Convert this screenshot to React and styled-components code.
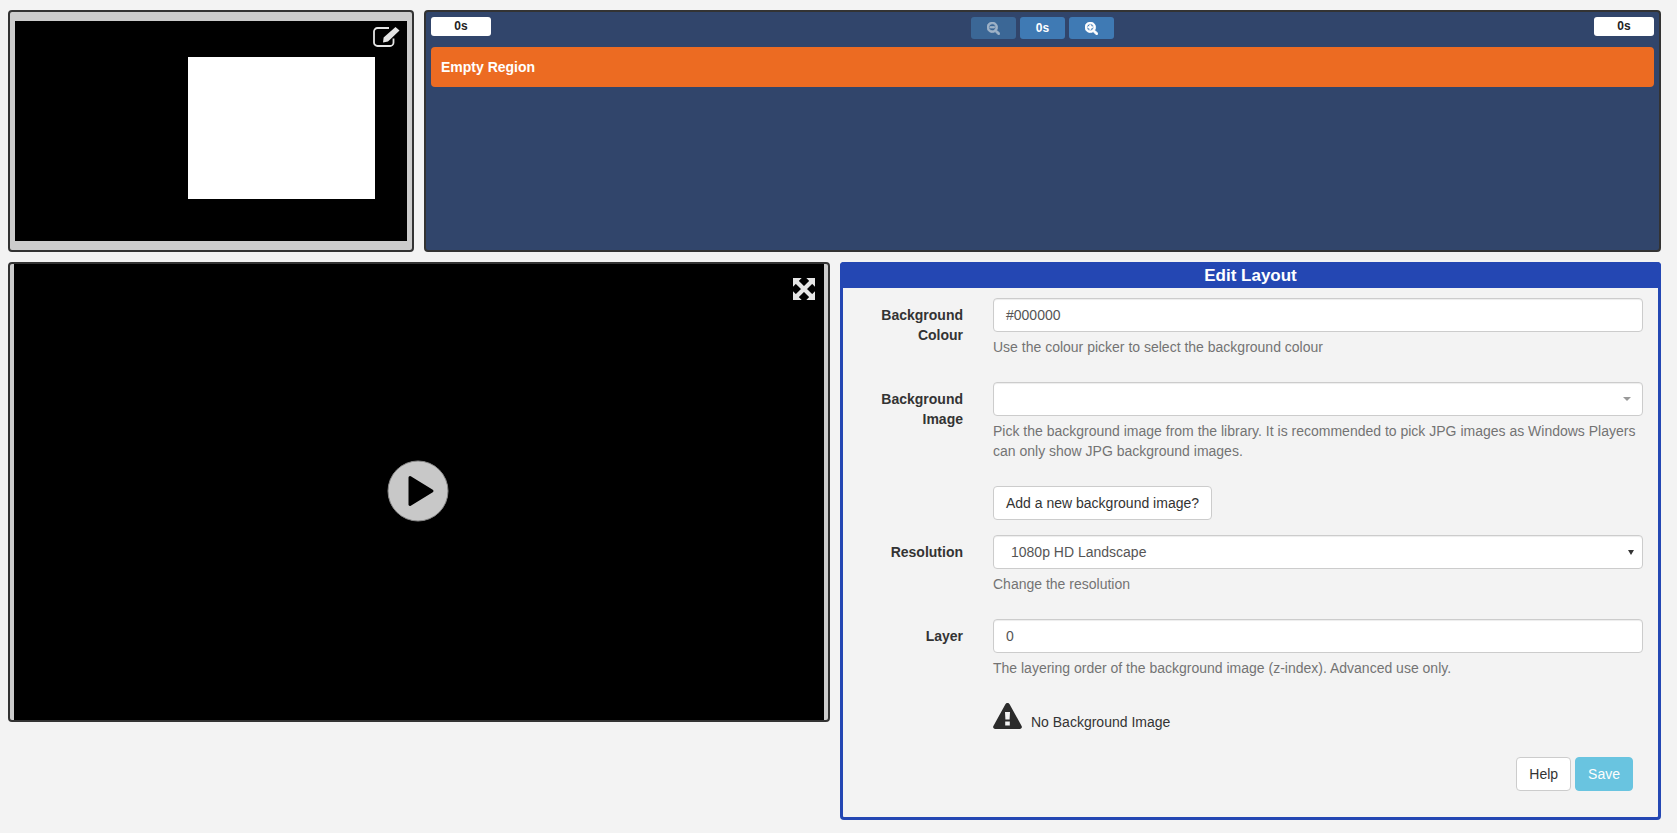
import React from "react";
import styled, { createGlobalStyle } from "styled-components";
import { FaSearchMinus, FaSearchPlus } from "react-icons/fa";

const Global = createGlobalStyle`
  html, body { margin: 0; padding: 0; background: #f3f3f3; }
  * { box-sizing: border-box; }
  body { font-family: "Liberation Sans", Arial, sans-serif; font-size: 14px; line-height: 20px; color: #333; }
`;
const Page = styled.div`
  width: 1677px; height: 833px; padding: 10px 16px 0 8px;
  display: grid; grid-template-columns: 406px 1237px; column-gap: 10px; row-gap: 10px; align-content: start;
`;
const Lower = styled.div`
  grid-column: 1 / span 2; display: grid; grid-template-columns: 822px 821px; column-gap: 10px; align-items: start;
`;
const PreviewPanel = styled.div`
  position: relative; height: 242px; padding: 9px 5px; background: #ccc; border: 2px solid #333; border-radius: 4px;
`;
const PreviewCanvas = styled.div`
  height: 220px; background: #000; padding: 36px 32px 0 161px; display: flex; justify-content: flex-end; align-items: flex-start;
`;
const WhiteRegion = styled.div`
  width: 187px; height: 142px; background: #fff;
`;
const EditIcon = styled.svg`
  position: absolute; top: 14px; left: 363px; width: 27px; height: 21px; color: #e4e4e4;
`;
const Timeline = styled.div`
  height: 242px; background: #31456b; border: 2px solid #333; border-radius: 4px; padding: 5px;
`;
const TimeBar = styled.div`
  display: flex; justify-content: space-between; align-items: flex-start; height: 30px;
`;
const TimePill = styled.div`
  width: 60px; height: 19px; background: #fff; border-radius: 3px; font-size: 12px; font-weight: 700; line-height: 19px; text-align: center; color: #222;
`;
const ZoomGroup = styled.div`
  display: flex; gap: 4px;
`;
const ZoomButton = styled.div`
  width: 45px; height: 22px; border-radius: 3px; background: ${p => p.$faded ? "#3b6796" : "#3f7ab4"};
  color: ${p => p.$faded ? "#9fb3c8" : "#fff"}; font-size: 12px; font-weight: 700; line-height: 22px;
  display: flex; align-items: center; justify-content: center;
  svg { stroke: currentColor; stroke-width: 30px; }
`;
const RegionBar = styled.div`
  height: 40px; background: #ec6b22; border-radius: 4px; color: #fff; font-weight: 700; font-size: 14px; line-height: 40px; padding-left: 10px;
`;
const VideoPanel = styled.div`
  position: relative; height: 460px; background: #ccc; border: 2px solid #333; border-radius: 4px; padding: 0 4px;
  display: flex;
`;
const VideoCanvas = styled.div`
  flex: 1; background: #000; display: flex; align-items: center; justify-content: center;
`;
const PlayIcon = styled.svg`
  width: 62px; height: 62px; display: block; margin-top: -2px; margin-left: -2px;
`;
const ExpandIcon = styled.svg`
  position: absolute; top: 14px; right: 13px; width: 22px; height: 22px; color: #e6e6e6;
`;
const EditPanel = styled.div`
  height: 558px; border: 3px solid #2447b3; border-top: 0; border-radius: 4px; display: flex; flex-direction: column;
`;
const Header = styled.div`
  height: 26px; margin: 0 -3px; background: #2447b3; color: #fff; font-size: 17px; font-weight: 700; line-height: 27px; text-align: center; border-radius: 4px 4px 0 0;
`;
const Form = styled.div`
  padding: 10px 15px 0 0; display: grid; grid-template-columns: 120px 1fr; column-gap: 30px; flex: 1; align-content: start;
`;
const Label = styled.label`
  font-weight: 700; text-align: right; padding-top: 7px; padding-left: 20px; color: #333; display: block;
`;
const FieldCell = styled.div`
  margin-bottom: 15px;
`;
const Input = styled.div`
  height: 34px; background: #fff; border: 1px solid #ccc; border-radius: 4px; padding: 6px 12px; color: #555; line-height: 20px; position: relative;
  box-shadow: inset 0 1px 1px rgba(0,0,0,.075);
`;
const SelectValue = styled.span`
  padding-left: 5px;
`;
const Caret = styled.span`
  position: absolute; top: 14px; right: ${p => p.$right}px; width: 0; height: 0; border-left: ${p => p.$w}px solid transparent; border-right: ${p => p.$w}px solid transparent; border-top: ${p => p.$h}px solid ${p => p.$color};
`;
const Help = styled.div`
  margin: 5px 0 10px; color: #737373;
`;
const AddButton = styled.div`
  display: inline-block; height: 34px; padding: 6px 12px; background: #fff; border: 1px solid #ccc; border-radius: 4px; color: #333; vertical-align: top;
`;
const WarningRow = styled.div`
  display: flex; align-items: flex-end; gap: 9px; height: 26px; color: #333; grid-column: 2;
`;
const WarningIcon = styled.svg`
  width: 29px; height: 26px; color: #2b2b2b; display: block;
`;
const WarningText = styled.span`
  line-height: 20px; margin-bottom: -3px;
`;
const Footer = styled.div`
  grid-column: 2; display: flex; justify-content: flex-end; gap: 4px; margin-top: 28px; padding-right: 10px;
`;
const HelpButton = styled.div`
  height: 34px; padding: 6px 12px; background: #fff; border: 1px solid #ccc; border-radius: 4px; color: #333;
`;
const SaveButton = styled.div`
  height: 34px; padding: 6px 12px; background: #5bc0de; opacity: .9; border: 1px solid #5bc0de; border-radius: 4px; color: #fff;
`;

export default function App() {
  return (
    <>
      <Global />
      <Page>
        <PreviewPanel>
          <PreviewCanvas><WhiteRegion /></PreviewCanvas>
          <EditIcon viewBox="0 0 27 21">
            <path d="M16 2 H4.5 A3.5 3.5 0 0 0 1 5.5 V16.5 A3.5 3.5 0 0 0 4.5 20 H17 A3.5 3.5 0 0 0 20.5 16.5 V12.5" fill="none" stroke="currentColor" strokeWidth="1.8" />
            <path d="M22.5 1 L26.5 4.5 L15 15.5 L10 16.5 L10.6 11.5 Z" fill="currentColor" />
          </EditIcon>
        </PreviewPanel>
        <Timeline>
          <TimeBar>
            <TimePill>0s</TimePill>
            <ZoomGroup>
              <ZoomButton $faded><FaSearchMinus size={13} /></ZoomButton>
              <ZoomButton>0s</ZoomButton>
              <ZoomButton><FaSearchPlus size={13} /></ZoomButton>
            </ZoomGroup>
            <TimePill>0s</TimePill>
          </TimeBar>
          <RegionBar>Empty Region</RegionBar>
        </Timeline>
        <Lower>
          <VideoPanel>
            <VideoCanvas>
              <PlayIcon viewBox="0 0 62 62">
                <circle cx="31" cy="31" r="30" fill="#c8c8c8" stroke="#888" strokeWidth="1" />
                <path d="M23 17.5 L45 31 L23 44.5 Z" fill="#000" stroke="#000" strokeWidth="3" strokeLinejoin="round" />
              </PlayIcon>
            </VideoCanvas>
            <ExpandIcon viewBox="0 0 24 24">
              <path d="M0 0 H9.5 L0 9.5 Z M24 0 V9.5 L14.5 0 Z M24 24 H14.5 L24 14.5 Z M0 24 V14.5 L9.5 24 Z" fill="currentColor" />
              <path d="M4 4 L20 20 M20 4 L4 20" stroke="currentColor" strokeWidth="4.6" fill="none" />
            </ExpandIcon>
          </VideoPanel>
          <EditPanel>
            <Header>Edit Layout</Header>
            <Form>
              <Label>Background Colour</Label>
              <FieldCell>
                <Input>#000000</Input>
                <Help>Use the colour picker to select the background colour</Help>
              </FieldCell>
              <Label>Background Image</Label>
              <FieldCell>
                <Input><Caret $right={11} $w={4} $h={4} $color="#999" /></Input>
                <Help>Pick the background image from the library. It is recommended to pick JPG images as Windows Players can only show JPG background images.</Help>
              </FieldCell>
              <span />
              <FieldCell><AddButton>Add a new background image?</AddButton></FieldCell>
              <Label>Resolution</Label>
              <FieldCell>
                <Input><SelectValue>1080p HD Landscape</SelectValue><Caret $right={8} $w={3} $h={5} $color="#333" /></Input>
                <Help>Change the resolution</Help>
              </FieldCell>
              <Label>Layer</Label>
              <FieldCell>
                <Input>0</Input>
                <Help>The layering order of the background image (z-index). Advanced use only.</Help>
              </FieldCell>
              <WarningRow>
                <WarningIcon viewBox="0 0 29 26">
                  <path fillRule="evenodd" fill="currentColor" d="M14.5 0 C15.4 0 16.1 .5 16.6 1.3 L28.6 23 C29.4 24.5 28.4 26 26.8 26 H2.2 C.6 26 -.4 24.5 .4 23 L12.4 1.3 C12.9 .5 13.6 0 14.5 0 Z M12 9 L12.4 16.5 H16.6 L17 9 Z M12.2 18.5 V22.5 H16.8 V18.5 Z" />
                </WarningIcon>
                <WarningText>No Background Image</WarningText>
              </WarningRow>
              <Footer><HelpButton>Help</HelpButton><SaveButton>Save</SaveButton></Footer>
            </Form>
          </EditPanel>
        </Lower>
      </Page>
    </>
  );
}
